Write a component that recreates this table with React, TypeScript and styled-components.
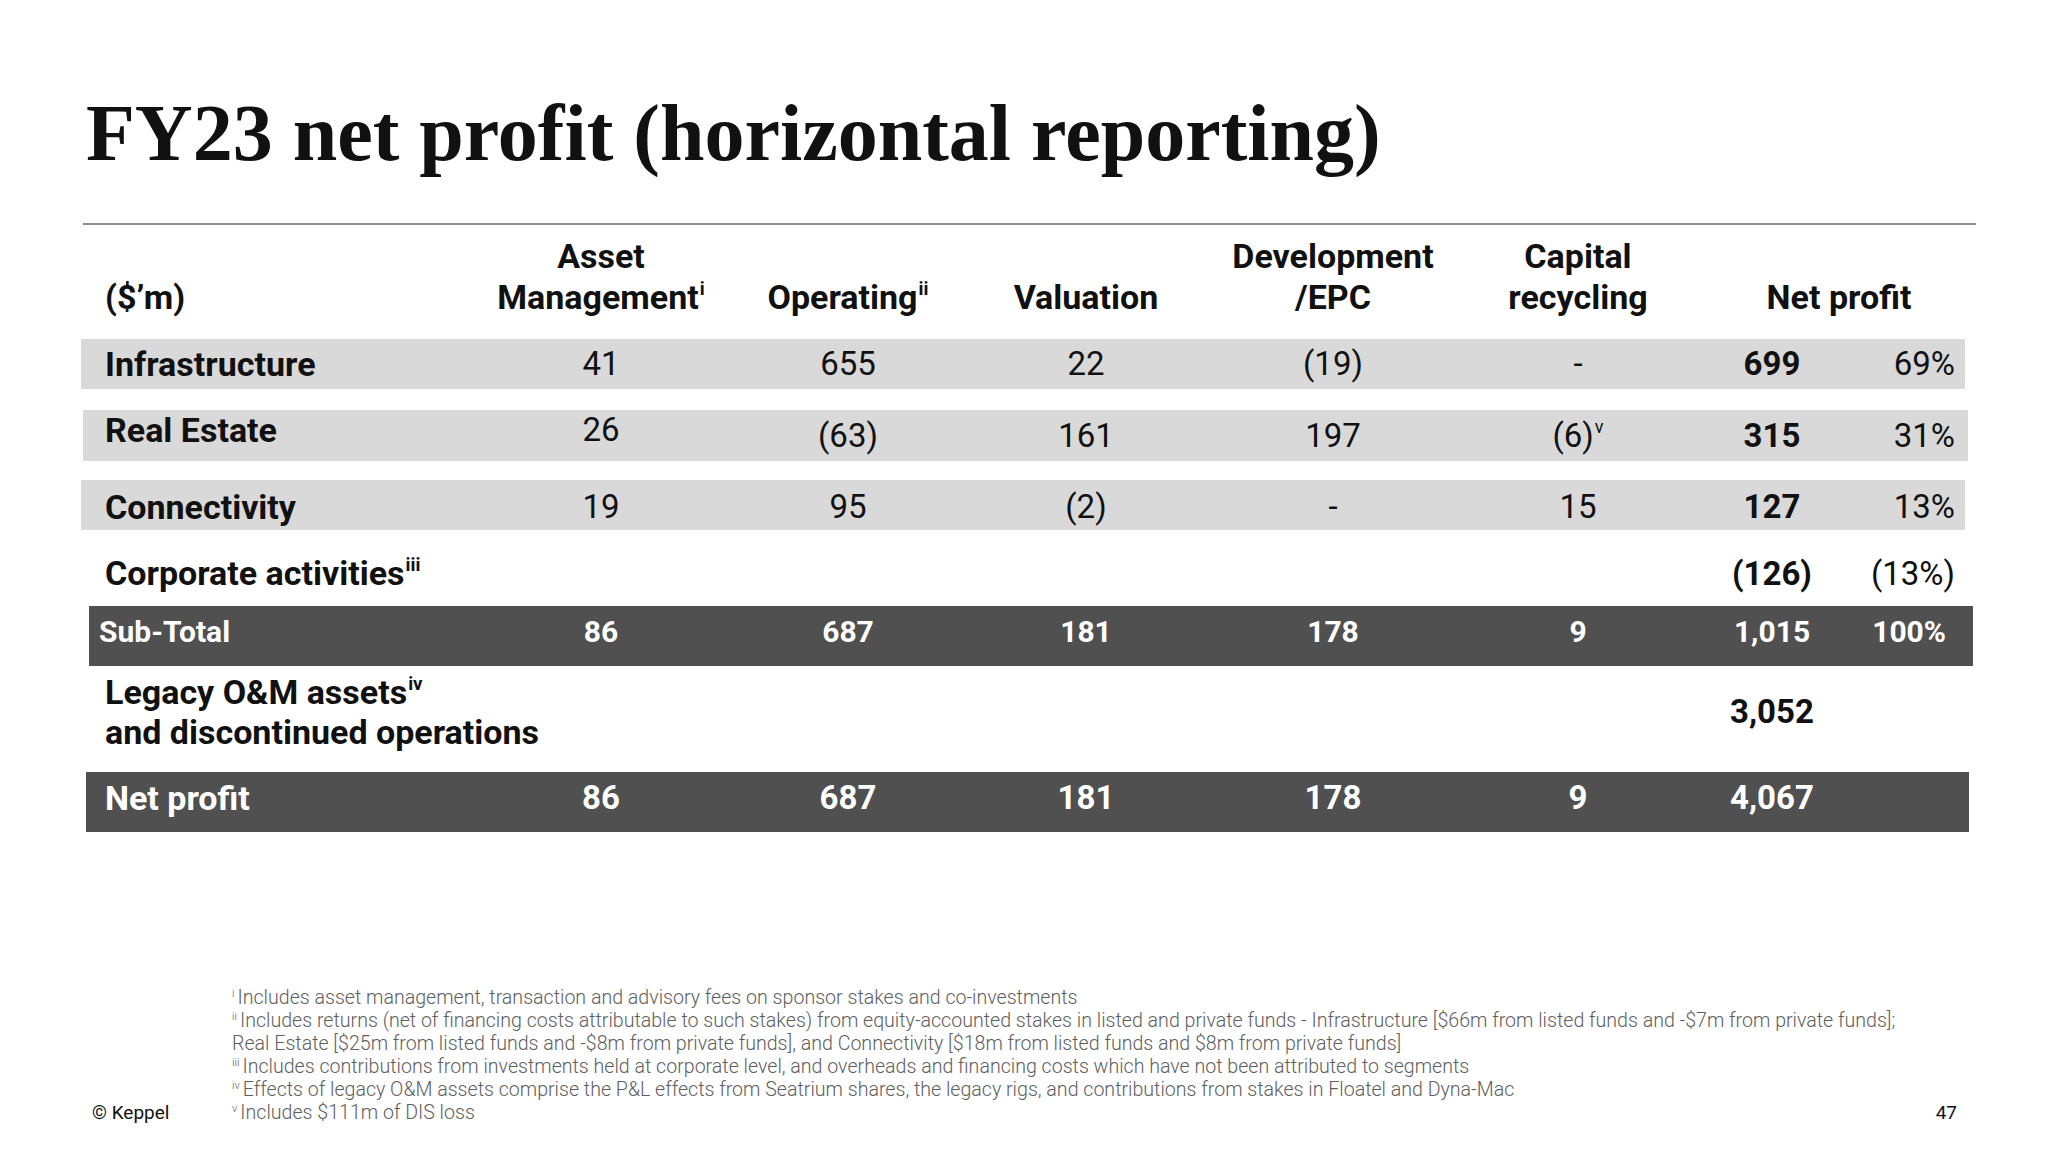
import React from "react";
import styled, { createGlobalStyle } from "styled-components";

const GlobalStyle = createGlobalStyle`
  html, body {
    margin: 0;
    padding: 0;
    background: #ffffff;
  }
  body {
    font-family: Roboto, "Liberation Sans", Arial, sans-serif;
    color: #111111;
  }
`;

// column widths of the table, label column first, percent column last
const COLS = [396, 246, 248, 228, 266, 224, 164, 112];
const TABLE_W = COLS.reduce((a, b) => a + b, 0);

const columns = (l = 0, r = 0) =>
    COLS.map((w, i) => (i === 0 ? w - l : i === COLS.length - 1 ? w + r : w))
        .map((w) => `${w}px`)
        .join(" ");

const Page = styled.div`
    width: 2048px;
    height: 1152px;
    display: flex;
    flex-direction: column;
    overflow: hidden;
`;

const Title = styled.h1`
    margin: 93px 0 0 86px;
    font-family: "Liberation Serif", "DejaVu Serif", serif;
    font-weight: 700;
    font-size: 80px;
    line-height: 80px;
    color: #111111;
`;

const Rule = styled.div`
    margin: 50px 0 0 83px;
    width: 1893px;
    height: 2px;
    background: #8c8c8c;
`;

const Table = styled.div`
    margin: 11px 0 0 82px;
    display: flex;
    flex-direction: column;
    align-items: flex-start;
`;

type Tone = "none" | "light" | "dark";

const Row = styled.div<{ $l?: number; $r?: number; $tone?: Tone; $h?: number; $gap?: number; $shift?: number }>`
    display: grid;
    grid-template-columns: ${(p) => columns(p.$l, p.$r)};
    width: ${(p) => TABLE_W - (p.$l ?? 0) + (p.$r ?? 0)}px;
    margin-left: ${(p) => p.$l ?? 0}px;
    height: ${(p) => (p.$h ? `${p.$h}px` : "auto")};
    margin-bottom: ${(p) => p.$gap ?? 0}px;
    padding-top: ${(p) => p.$shift ?? 0}px;
    align-items: center;
    box-sizing: border-box;
    font-size: 33px;
    line-height: 1.2;
    background: ${(p) => (p.$tone === "light" ? "#d9d9d9" : p.$tone === "dark" ? "#505050" : "transparent")};
    color: ${(p) => (p.$tone === "dark" ? "#ffffff" : "#111111")};
`;

const HeadRow = styled(Row)`
    align-items: end;
    font-weight: 700;
    font-size: 34px;
    line-height: 41px;
`;

const SubTotalRow = styled(Row)`
    font-size: 30px;
    font-weight: 700;
    padding-bottom: 8px;
`;

const NetRow = styled(Row)`
    font-weight: 700;
    padding-bottom: 8px;
`;

const CorporateRow = styled(Row)`
    align-items: end;
    padding-bottom: 12px;
`;

const LegacyRow = styled(Row)`
    padding: 6px 0 20px;
    line-height: 40px;
`;

const Label = styled.div<{ $pad?: number; $top?: boolean; $size?: number }>`
    padding-left: ${(p) => p.$pad ?? 23}px;
    font-weight: 700;
    font-size: ${(p) => p.$size ?? 34}px;
    white-space: nowrap;
    align-self: ${(p) => (p.$top ? "start" : "auto")};
`;

const HeadCell = styled.div<{ $span?: number; $shift?: number }>`
    text-align: center;
    grid-column: span ${(p) => p.$span ?? 1};
    padding-left: ${(p) => p.$shift ?? 0}px;
    white-space: nowrap;
`;

const Num = styled.div<{ $bold?: boolean; $top?: boolean }>`
    text-align: center;
    font-weight: ${(p) => (p.$bold ? 700 : "inherit")};
    align-self: ${(p) => (p.$top ? "start" : "auto")};
    white-space: nowrap;
`;

const Pct = styled.div<{ $pad?: number }>`
    text-align: right;
    padding-right: ${(p) => p.$pad ?? 11}px;
    white-space: nowrap;
`;

const Sup = styled.sup`
    font-size: 0.55em;
    line-height: 0;
    vertical-align: baseline;
    position: relative;
    top: -0.75em;
    margin-left: 1px;
`;

const Footer = styled.div`
    margin-top: auto;
    padding-bottom: 28px;
    display: flex;
    align-items: flex-end;
`;

const Copyright = styled.div`
    margin-left: 92px;
    width: 140px;
    font-size: 19px;
    line-height: 22px;
    color: #111111;
`;

const Notes = styled.div`
    flex: 1;
    font-size: 19.6px;
    line-height: 23px;
    font-weight: 300;
    color: #5e5e5e;
    white-space: nowrap;
`;

const NoteMark = styled.sup`
    font-size: 11px;
    line-height: 0;
    vertical-align: baseline;
    position: relative;
    top: -7px;
    margin-right: 3px;
`;

const PageNum = styled.div`
    margin-right: 91px;
    font-size: 19px;
    line-height: 22px;
    color: #111111;
`;

type Seg = {
    label: React.ReactNode;
    values: React.ReactNode[];
    total: string;
    pct: string;
    l?: number;
    r?: number;
    gap: number;
    h: number;
    top?: boolean;
    shift?: number;
};

const segments: Seg[] = [
    { label: "Infrastructure", values: ["41", "655", "22", "(19)", "-"], total: "699", pct: "69%", l: -1, r: -1, gap: 21, h: 50 },
    {
        label: "Real Estate",
        values: ["26", "(63)", "161", "197", <>(6)<Sup>v</Sup></>],
        total: "315",
        pct: "31%",
        l: 1,
        r: 2,
        gap: 19,
        h: 51,
        top: true,
    },
    { label: "Connectivity", values: ["19", "95", "(2)", "-", "15"], total: "127", pct: "13%", l: -1, r: -1, gap: 0, h: 50, shift: 4 },
];

const totals = ["86", "687", "181", "178", "9"];

const notes: React.ReactNode[] = [
    <><NoteMark>i</NoteMark>Includes asset management, transaction and advisory fees on sponsor stakes and co-investments</>,
    <><NoteMark>ii</NoteMark>Includes returns (net of financing costs attributable to such stakes) from equity-accounted stakes in listed and private funds - Infrastructure [$66m from listed funds and -$7m from private funds];</>,
    <>Real Estate [$25m from listed funds and -$8m from private funds], and Connectivity [$18m from listed funds and $8m from private funds]</>,
    <><NoteMark>iii</NoteMark>Includes contributions from investments held at corporate level, and overheads and financing costs which have not been attributed to segments</>,
    <><NoteMark>iv</NoteMark>Effects of legacy O&amp;M assets comprise the P&amp;L effects from Seatrium shares, the legacy rigs, and contributions from stakes in Floatel and Dyna-Mac</>,
    <><NoteMark>v</NoteMark>Includes $111m of DIS loss</>,
];

export default function App() {
    return (
        <>
            <GlobalStyle />
            <Page>
                <Title>FY23 net profit (horizontal reporting)</Title>
                <Rule />
                <Table>
                    <HeadRow $gap={21}>
                        <Label>($’m)</Label>
                        <HeadCell>Asset<br />Management<Sup>i</Sup></HeadCell>
                        <HeadCell>Operating<Sup>ii</Sup></HeadCell>
                        <HeadCell>Valuation</HeadCell>
                        <HeadCell>Development<br />/EPC</HeadCell>
                        <HeadCell>Capital<br />recycling</HeadCell>
                        <HeadCell $span={2} $shift={22}>Net profit</HeadCell>
                    </HeadRow>

                    {segments.map((s) => (
                        <Row key={s.total} $tone="light" $l={s.l} $r={s.r} $h={s.h} $gap={s.gap} $shift={s.shift}>
                            <Label $pad={23 - (s.l ?? 0)} $top={s.top}>{s.label}</Label>
                            {s.values.map((v, i) => (
                                <Num key={i} $top={s.top && i === 0}>{v}</Num>
                            ))}
                            <Num $bold>{s.total}</Num>
                            <Pct $pad={11 + (s.r ?? 0)}>{s.pct}</Pct>
                        </Row>
                    ))}

                    <CorporateRow $h={76}>
                        <Label>Corporate activities<Sup>iii</Sup></Label>
                        <div />
                        <div />
                        <div />
                        <div />
                        <div />
                        <Num $bold>(126)</Num>
                        <Pct>(13%)</Pct>
                    </CorporateRow>

                    <SubTotalRow $tone="dark" $l={7} $r={7} $h={60}>
                        <Label $pad={10} $size={30}>Sub-Total</Label>
                        {totals.map((v, i) => (
                            <Num key={i}>{v}</Num>
                        ))}
                        <Num>1,015</Num>
                        <Pct $pad={27}>100%</Pct>
                    </SubTotalRow>

                    <LegacyRow $h={106}>
                        <Label>Legacy O&amp;M assets<Sup>iv</Sup><br />and discontinued operations</Label>
                        <div />
                        <div />
                        <div />
                        <div />
                        <div />
                        <Num $bold>3,052</Num>
                        <div />
                    </LegacyRow>

                    <NetRow $tone="dark" $l={4} $r={3} $h={60}>
                        <Label $pad={19}>Net profit</Label>
                        {totals.map((v, i) => (
                            <Num key={i}>{v}</Num>
                        ))}
                        <Num>4,067</Num>
                        <div />
                    </NetRow>
                </Table>

                <Footer>
                    <Copyright>© Keppel</Copyright>
                    <Notes>
                        {notes.map((n, i) => (
                            <div key={i}>{n}</div>
                        ))}
                    </Notes>
                    <PageNum>47</PageNum>
                </Footer>
            </Page>
        </>
    );
}
